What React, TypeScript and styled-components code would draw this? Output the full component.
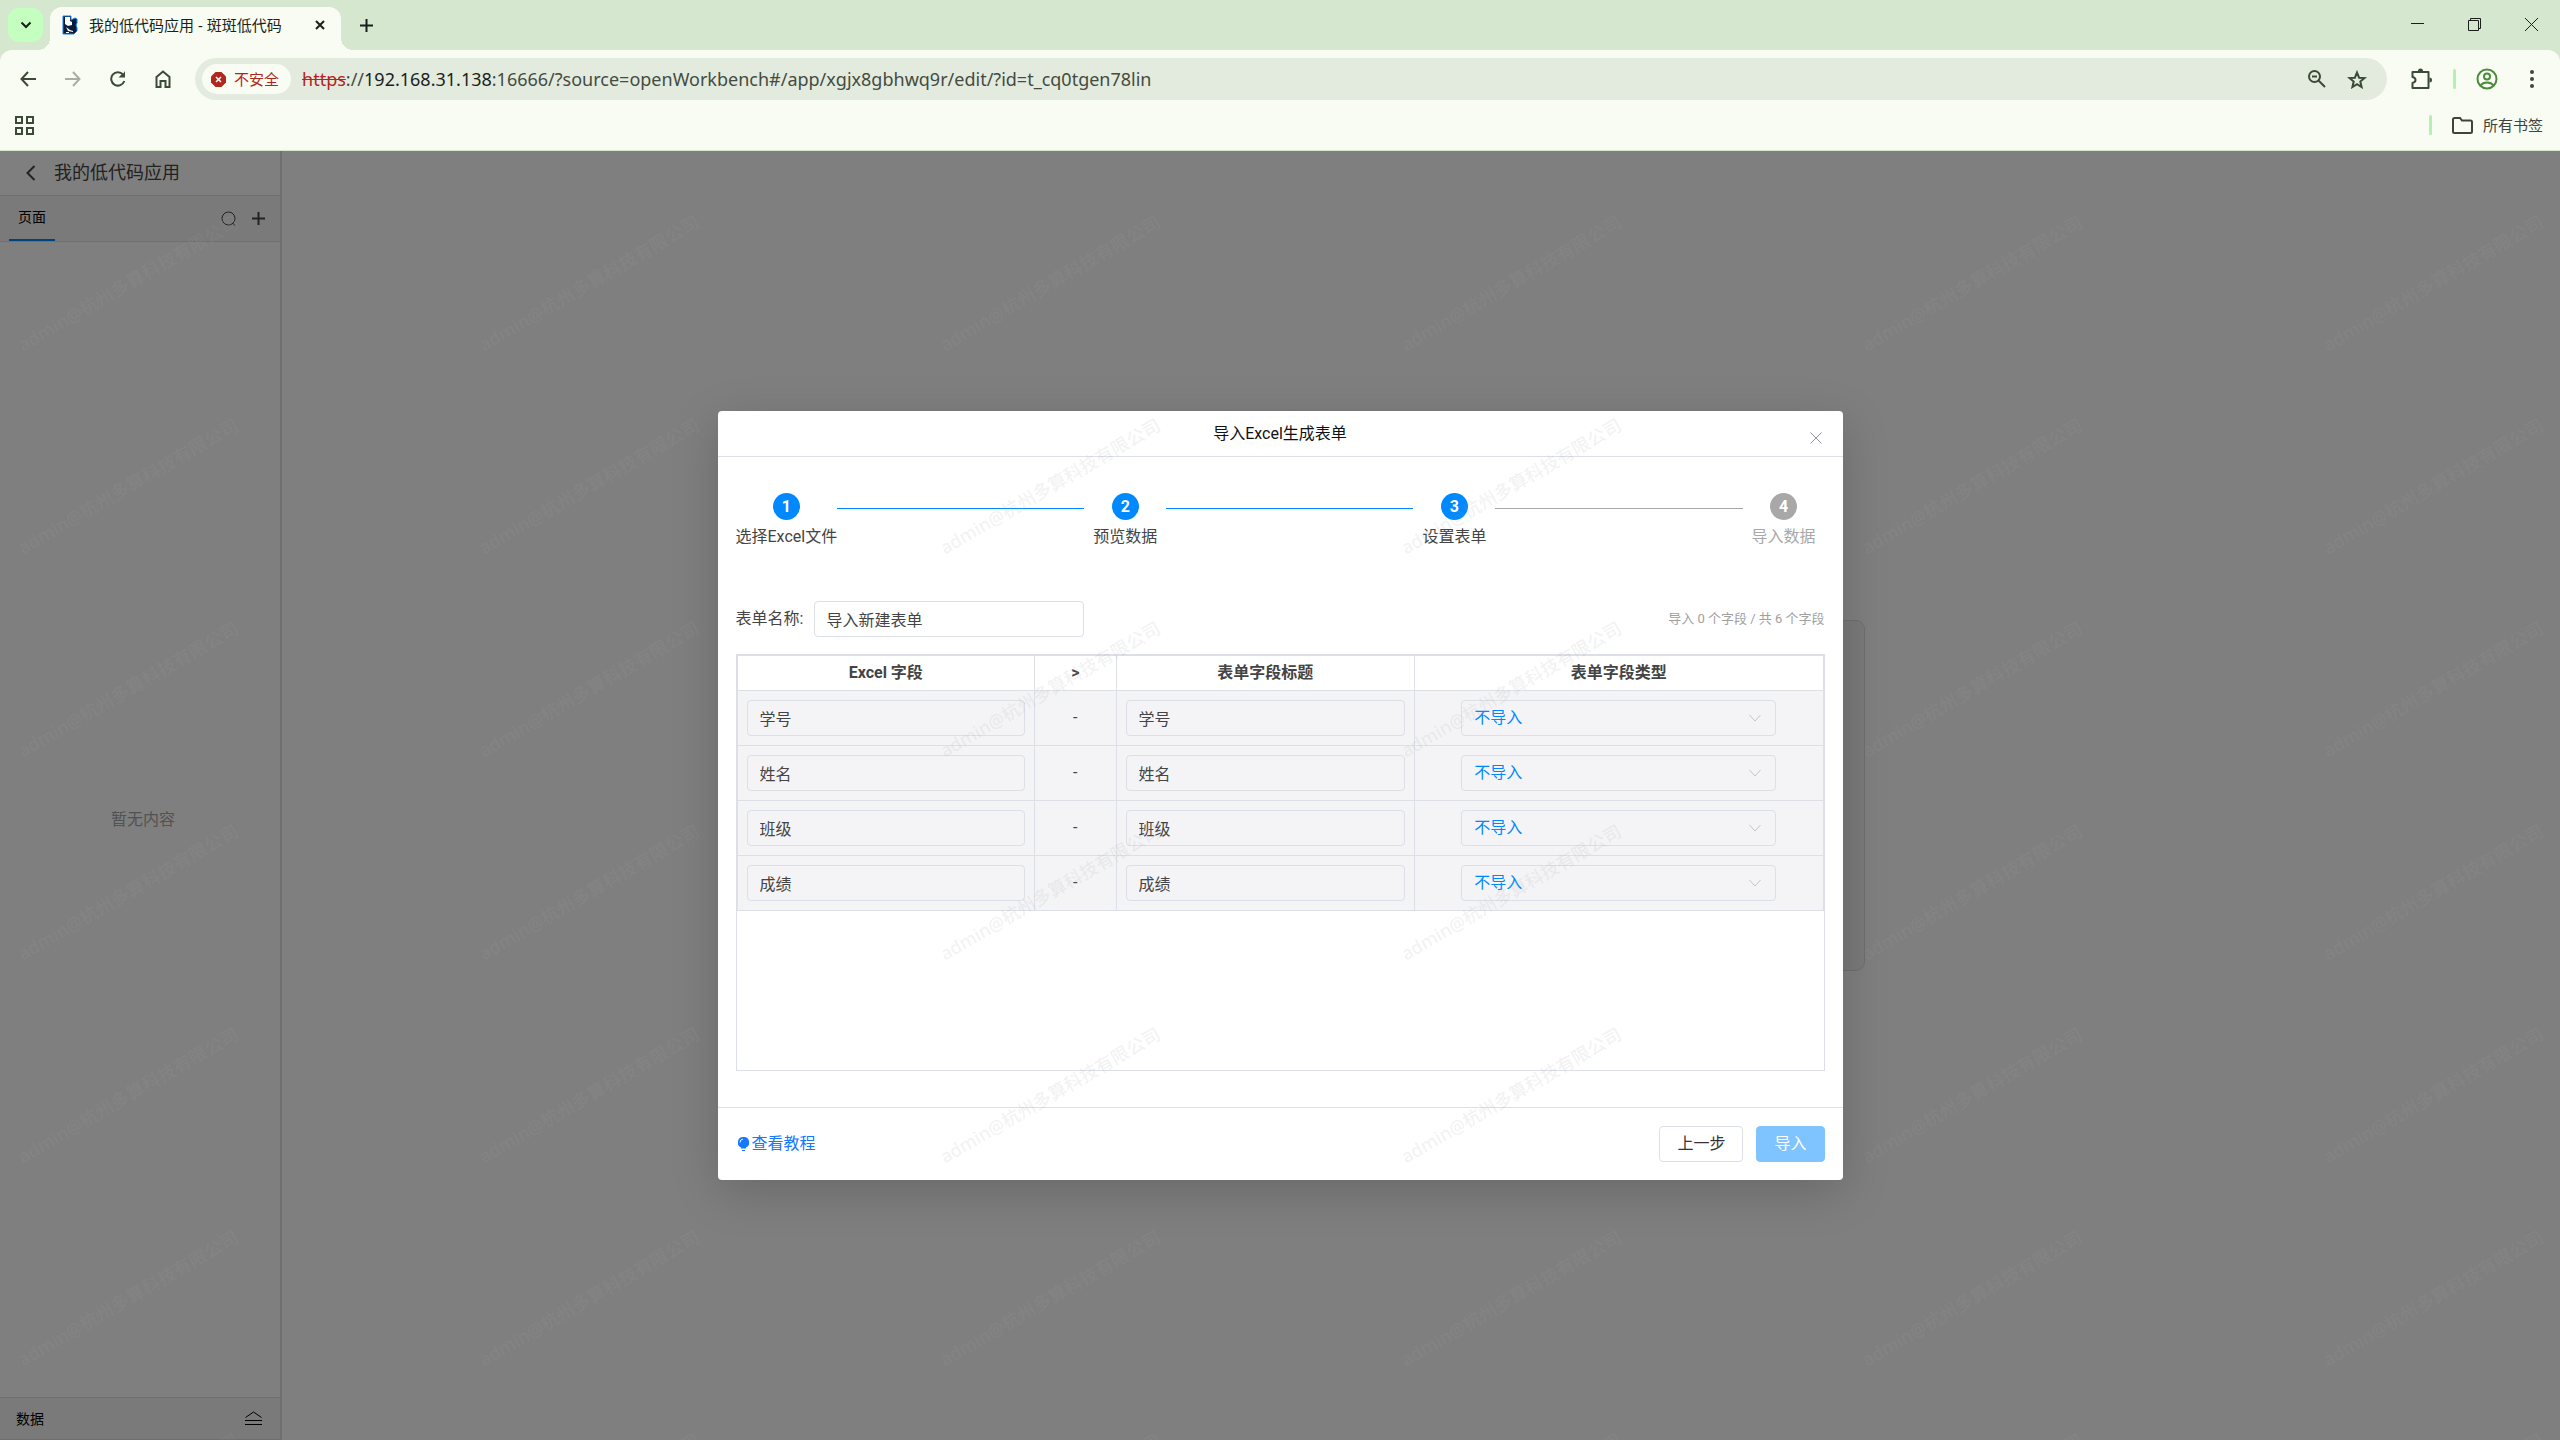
import React from "react";
import styled, { createGlobalStyle, css } from "styled-components";

const uiFont = `Roboto, "Noto Sans CJK SC", sans-serif`;
const chromeFont = `"Noto Sans", "Noto Sans CJK SC", sans-serif`;
const line = "#dcdfe6";
const blue = "#0089ff";

const GlobalStyle = createGlobalStyle`
  * { box-sizing: border-box; }
  html, body, #root { height: 100%; }
  body { margin: 0; font: 16px/24px ${uiFont}; color: #444; }
  button, input, select { font: inherit; color: inherit; margin: 0; }
  button { background: none; border: 0; padding: 0; cursor: pointer; }
  svg { display: block; }
`;

const Window = styled.div`
  display: flex;
  flex-direction: column;
  height: 100vh;
  overflow: hidden;
`;

/* ---------- browser frame ---------- */

const Frame = styled.header`
  background: #d5e7cf;
  border-bottom: 1px solid #d5e7cf;
  font: 15px/20px ${chromeFont};
  color: #1b1f1a;
`;
const TabStrip = styled.div`
  display: flex;
  height: 50px;
  padding: 7px 0 0 8px;
`;
const TabSearch = styled.button`
  width: 35px;
  height: 34px;
  margin: 1px 7px 0 0;
  border-radius: 11px;
  background: #c5ffbf;
  display: grid;
  place-items: center;
`;
const BrowserTab = styled.div`
  position: relative;
  width: 291px;
  padding: 0 13px 7px 12px;
  display: flex;
  align-items: center;
  background: #f8fcf2;
  border-radius: 12px 12px 0 0;
  &::before, &::after {
    content: "";
    position: absolute;
    bottom: 0;
    width: 12px;
    height: 12px;
  }
  &::before { left: -12px; background: radial-gradient(circle at 0 0, transparent 12px, #f8fcf2 12px); }
  &::after { right: -12px; background: radial-gradient(circle at 100% 0, transparent 12px, #f8fcf2 12px); }
`;
const TabTitle = styled.span`
  flex: 1;
  margin-left: 11px;
  white-space: nowrap;
`;
const PlainButton = styled.button<{ $w: number; $h?: number }>`
  width: ${p => p.$w}px;
  height: ${p => p.$h ?? 36}px;
  flex: none;
  display: grid;
  place-items: center;
`;
const WindowControls = styled.div`
  display: flex;
  margin-left: auto;
`;
const Chrome = styled.div`
  background: #f8fcf2;
  border-radius: 12px 12px 0 0;
  color: #3c4a38;
`;
const Toolbar = styled.div`
  display: flex;
  align-items: center;
  height: 58px;
  padding: 0 6px 0 5px;
`;
const NavButtons = styled.div`
  display: flex;
  width: 190px;
`;
const Omnibox = styled.div`
  flex: 1;
  display: flex;
  align-items: center;
  height: 42px;
  padding: 0 10px 0 7px;
  border-radius: 21px;
  background: #e3ebdf;
`;
const Unsafe = styled.button`
  display: flex;
  align-items: center;
  gap: 8px;
  height: 30px;
  padding: 0 12px 0 9px;
  border-radius: 15px;
  background: #f8fcf2;
  color: #b3261e;
  white-space: nowrap;
`;
const Url = styled.span`
  flex: 1;
  margin-left: 11px;
  font-size: 18px;
  line-height: 24px;
  white-space: nowrap;
  color: #444b41;
  s { color: #b3261e; }
  b { font-weight: 400; color: #1b1f1a; }
`;
const Divider = styled.span`
  width: 3px;
  height: 20px;
  border-radius: 2px;
  background: #b5f1ae;
`;
const Actions = styled.div`
  display: flex;
  align-items: center;
  padding-left: 11px;
`;
const Bookmarks = styled.div`
  display: flex;
  align-items: center;
  justify-content: space-between;
  height: 42px;
  padding: 0 17px 8px 15px;
`;
const AllBookmarks = styled.button`
  display: flex;
  align-items: center;
  gap: 10px;
  color: #3e433b;
`;
const BookmarkEnd = styled.div`
  display: flex;
  align-items: center;
  gap: 20px;
`;

/* ---------- application behind the dialog ---------- */

const Page = styled.div`
  position: relative;
  flex: 1;
  display: flex;
  min-height: 0;
  overflow: hidden;
`;
const Sidebar = styled.aside`
  width: 282px;
  flex: none;
  display: flex;
  flex-direction: column;
  border-right: 2px solid ${line};
  background: #fff;
`;
const AppHeader = styled.div`
  display: flex;
  align-items: center;
  height: 45px;
  padding-left: 23px;
  border-bottom: 1px solid ${line};
  font-size: 18px;
`;
const AppName = styled.span`
  margin-left: 15px;
`;
const PageTabs = styled.div`
  display: flex;
  align-items: center;
  height: 46px;
  padding: 0 7px 0 9px;
  border-bottom: 1px solid ${line};
  background: #f4f5f7;
  font-size: 14px;
`;
const PageTab = styled.button`
  height: 45px;
  padding: 0 9px 1px;
  margin-right: auto;
  border-bottom: 2px solid ${blue};
  color: #000;
`;
const Empty = styled.div`
  flex: 1;
  display: grid;
  place-items: center;
  padding-left: 6px;
  color: #a6a6a6;
`;
const DataBar = styled.div`
  display: flex;
  align-items: center;
  justify-content: space-between;
  height: 43px;
  padding: 0 18px 0 16px;
  border: solid ${line};
  border-width: 1px 0;
  background: #f4f5f7;
  font-size: 14px;
  color: #000;
`;
const Workspace = styled.main`
  flex: 1;
  display: grid;
  place-items: center;
  background: #fff;
`;
const EmptyCard = styled.div`
  width: 888px;
  height: 351px;
  border: 1px solid ${line};
  border-radius: 9px;
  background: #f4f4f5;
`;

/* ---------- dialog ---------- */

const Mask = styled.div`
  position: absolute;
  inset: 0;
  display: grid;
  place-items: center;
  background: rgba(0, 0, 0, 0.5);
`;
const Dialog = styled.section`
  width: 1125px;
  max-width: 100%;
  display: flex;
  flex-direction: column;
  background: #fff;
  border-radius: 4px;
  box-shadow: 0 12px 48px rgba(0, 0, 0, 0.18);
`;
const DialogHeader = styled.header`
  display: grid;
  grid-template-columns: 1fr auto 1fr;
  align-items: center;
  height: 46px;
  padding: 0 18px;
  border-bottom: 1px solid ${line};
`;
const DialogTitle = styled.h1`
  grid-column: 2;
  margin: 0;
  font-size: 16px;
  font-weight: 400;
  line-height: 24px;
  color: #111;
`;
const CloseButton = styled.button`
  justify-self: end;
  padding: 8px 3px 0;
  color: #909399;
`;
const DialogBody = styled.div`
  padding: 36px 18px;
`;
const Steps = styled.ol`
  display: flex;
  margin: 0 0 52px;
  padding: 0;
  list-style: none;
`;
const Step = styled.li<{ $off?: boolean }>`
  display: flex;
  flex-direction: column;
  align-items: center;
  gap: 5px;
  min-width: 82px;
  white-space: nowrap;
  color: ${p => (p.$off ? "#a8a8a8" : "#444")};
`;
const StepNumber = styled.span<{ $off?: boolean }>`
  width: 27px;
  height: 27px;
  border-radius: 50%;
  background: ${p => (p.$off ? "#a8a8a8" : blue)};
  color: #fff;
  font-weight: 700;
  line-height: 27px;
  text-align: center;
`;
const StepLine = styled.li<{ $off?: boolean }>`
  flex: 1;
  height: 1px;
  margin-top: 15px;
  background: ${p => (p.$off ? "#a8a8a8" : blue)};
`;
const NameRow = styled.div`
  display: flex;
  align-items: center;
  margin-bottom: 17px;
`;
const Count = styled.span`
  margin-left: auto;
  font-size: 13px;
  color: #a0a0a0;
`;
const fieldBox = css`
  height: 36px;
  padding: 0 12px;
  border: 1px solid ${line};
  border-radius: 4px;
  outline: 0;
  background: transparent;
`;
const TextField = styled.input<{ $width: string }>`
  ${fieldBox}
  display: block;
  width: ${p => p.$width};
`;
const NameLabel = styled.label`
  width: 78px;
`;
const TableBox = styled.div`
  height: 417px;
  border: 1px solid ${line};
`;
const FieldTable = styled.table`
  width: 100%;
  table-layout: fixed;
  border-collapse: collapse;
  th, td { border: 1px solid ${line}; text-align: center; }
  th { height: 35px; padding: 0; font-weight: 700; line-height: 24px; }
  td { height: 55px; padding: 0 9px; background: #f4f4f7; }
`;
const SelectBox = styled.div`
  position: relative;
  width: 315px;
  margin: 0 auto;
  svg { position: absolute; right: 15px; top: 14px; pointer-events: none; }
`;
const TypeSelect = styled.select`
  ${fieldBox}
  display: block;
  width: 100%;
  appearance: none;
  color: ${blue};
`;
const DialogFooter = styled.footer`
  display: flex;
  align-items: center;
  gap: 13px;
  padding: 18px;
  border-top: 1px solid ${line};
`;
const HelpLink = styled.a`
  display: flex;
  align-items: center;
  gap: 3px;
  margin-right: auto;
  padding-left: 2px;
  color: #1677ff;
  text-decoration: none;
`;
const FooterButton = styled.button<{ $primary?: boolean }>`
  height: 36px;
  padding: 0 17px;
  border: 1px solid ${p => (p.$primary ? "#7fc4ff" : line)};
  border-radius: 4px;
  background: ${p => (p.$primary ? "#7fc4ff" : "#fff")};
  color: ${p => (p.$primary ? "#fff" : "#333")};
`;

/* ---------- watermark ---------- */

const Watermarks = styled.div`
  position: absolute;
  inset: 0;
  display: grid;
  grid-template-columns: repeat(6, 461px);
  grid-auto-rows: 203px;
  align-items: center;
  padding-top: 30px;
  overflow: hidden;
  pointer-events: none;
  user-select: none;
`;
const Mark = styled.span`
  width: 256px;
  text-align: center;
  transform: rotate(-30deg);
  white-space: nowrap;
  font: 500 18px/24px ${chromeFont};
  color: rgba(160, 160, 160, 0.15);
`;

const Icon = ({ w, h = w, children, stroke = 2 }: { w: number; h?: number; stroke?: number; children: React.ReactNode }) => (
  <svg width={w} height={h} viewBox={`0 0 ${w} ${h}`} fill="none" stroke="currentColor" strokeWidth={stroke} aria-hidden="true">
    {children}
  </svg>
);

const steps = ["选择Excel文件", "预览数据", "设置表单", "导入数据"];
const fields = ["学号", "姓名", "班级", "成绩"];

const BrowserFrame = () => (
  <Frame>
    <TabStrip>
      <TabSearch aria-label="搜索标签页"><Icon w={12} h={8}><path d="M1.5 1.5 6 6l4.500-4.500" /></Icon></TabSearch>
      <BrowserTab>
        <svg width="16" height="20" viewBox="0 0 16 20" aria-hidden="true">
          <path d="M1 1h8v4l4-2 2 1v4l-1 2 1 3v3l-3 3H1z" fill="#0b1c3a" stroke="#1d7cf2" />
          <path d="M3 2h5v4l2 1v3l-4 1-3-2zM4 12l4 3 3 1v1l-5-1zM4 17h3v1H4z" fill="#fff" />
        </svg>
        <TabTitle>我的低代码应用 - 斑斑低代码</TabTitle>
        <PlainButton $w={16} $h={20} aria-label="关闭标签页"><Icon w={10}><path d="m1 1 8 8M9 1 1 9" /></Icon></PlainButton>
      </BrowserTab>
      <PlainButton $w={50} aria-label="新标签页"><Icon w={13}><path d="M6.500 0v13M0 6.500h13" /></Icon></PlainButton>
      <WindowControls>
        <PlainButton $w={57} $h={33} aria-label="最小化"><Icon w={13} stroke={1}><path d="M0 6.500h13" /></Icon></PlainButton>
        <PlainButton $w={57} $h={35} aria-label="还原"><Icon w={13} stroke={1}><path d="M.5 2.500h10v10H.5zM2.500 2.500v-2h10v10h-2" /></Icon></PlainButton>
        <PlainButton $w={57} $h={35} aria-label="关闭"><Icon w={13} stroke={1}><path d="m0 0 13 13M13 0 0 13" /></Icon></PlainButton>
      </WindowControls>
    </TabStrip>
    <Chrome>
      <Toolbar>
        <NavButtons>
          <PlainButton $w={45} aria-label="后退"><Icon w={16}><path d="M16 8H1.500M8 1 1.500 8 8 15" /></Icon></PlainButton>
          <PlainButton $w={45} disabled aria-label="前进"><svg width="16" height="16" fill="none" stroke="#a9aea5" strokeWidth="2"><path d="M0 8h14.500M8 1l6.500 7L8 15" /></svg></PlainButton>
          <PlainButton $w={45} aria-label="重新加载"><Icon w={16}><path d="M14.300 10A6.700 6.700 0 1 1 13 3.500" /><path d="M15 0v6.500H8.500L11 4l2-1z" fill="currentColor" stroke="none" /></Icon></PlainButton>
          <PlainButton $w={45} aria-label="主页"><Icon w={16} h={18}><path d="M1.500 7 8 1.500 14.500 7v10h-4v-6h-5v6h-4z" /></Icon></PlainButton>
        </NavButtons>
        <Omnibox>
          <Unsafe>
            <svg width="15" height="15" viewBox="0 0 15 15" aria-hidden="true"><path d="M4.500 0h6L15 4.500v6L10.500 15h-6L0 10.500v-6z" fill="#b3261e" /><path d="m5 5 5 5m0-5-5 5" stroke="#fff" strokeWidth="1.500" /></svg>
            不安全
          </Unsafe>
          <Url><s>https</s>://<b>192.168.31.138</b>:16666/?source=openWorkbench#/app/xgjx8gbhwq9r/edit/?id=t_cq0tgen78lin</Url>
          <PlainButton $w={40} aria-label="缩放"><Icon w={18}><circle cx="6.500" cy="6.500" r="5.500" /><path d="m10.500 10.500 6.500 6.500M4 6.500h5" /></Icon></PlainButton>
          <PlainButton $w={40} aria-label="收藏"><Icon w={20} h={19}><path d="m10 2.500 2.100 5.200 5.400.4-4.200 3.500 1.300 5.400-4.600-2.900L5.400 17l1.300-5.400L2.500 8.100l5.400-.4z" /></Icon></PlainButton>
        </Omnibox>
        <Actions>
          <PlainButton $w={46} aria-label="扩展程序"><Icon w={22}><path d="M2.500 4h16v16h-16v-5c4-1 4-5 0-6z" strokeLinejoin="round" /><path d="M8 3a2.500 2.500 0 0 1 5 0zM19.500 9.500a2.500 2.500 0 0 1 0 5z" fill="currentColor" stroke="none" /></Icon></PlainButton>
          <PlainButton as="span" $w={20}><Divider /></PlainButton>
          <PlainButton $w={46} aria-label="个人资料"><svg width="22" height="22" fill="none" stroke="#4c8a3c" strokeWidth="2"><circle cx="11" cy="11" r="9.500" /><circle cx="11" cy="8.500" r="3" /><path d="M4.500 17.500c3-4 10-4 13 0" /></svg></PlainButton>
          <PlainButton $w={44} aria-label="菜单"><svg width="4" height="18" fill="#3c4a38"><circle cx="2" cy="2" r="2" /><circle cx="2" cy="9" r="2" /><circle cx="2" cy="16" r="2" /></svg></PlainButton>
        </Actions>
      </Toolbar>
      <Bookmarks>
        <PlainButton $w={19} $h={20} aria-label="应用"><Icon w={19}><path d="M1 1h6v6H1zM12 1h6v6h-6zM1 12h6v6H1zM12 12h6v6h-6z" /></Icon></PlainButton>
        <BookmarkEnd>
          <Divider />
          <AllBookmarks><Icon w={21} h={17}><path d="M1 2.500Q1 1 2.500 1H8l2 2.500h8.500Q20 3.500 20 5v9.500q0 1.500-1.500 1.500h-16Q1 16 1 14.500z" /></Icon>所有书签</AllBookmarks>
        </BookmarkEnd>
      </Bookmarks>
    </Chrome>
  </Frame>
);

export default function App() {
  return (
    <Window>
      <GlobalStyle />
      <BrowserFrame />
      <Page>
        <Sidebar>
          <AppHeader>
            <PlainButton $w={16} $h={20} aria-label="返回"><Icon w={10} h={16}><path d="M8.500 1 1.500 8l7 7" /></Icon></PlainButton>
            <AppName>我的低代码应用</AppName>
          </AppHeader>
          <PageTabs>
            <PageTab>页面</PageTab>
            <PlainButton $w={30} aria-label="搜索"><Icon w={15} stroke={1}><circle cx="7.500" cy="7.500" r="6.500" /><path d="m11.500 12 2.500 2.500" /></Icon></PlainButton>
            <PlainButton $w={30} aria-label="新建"><Icon w={13}><path d="M6.500 0v13M0 6.500h13" /></Icon></PlainButton>
          </PageTabs>
          <Empty>暂无内容</Empty>
          <DataBar>
            数据
            <PlainButton $w={18} $h={20} aria-label="展开"><Icon w={17} h={15} stroke={1}><path d="M.5 6.500 8.500 1l8 5.500M0 9.500h17M0 13.500h17" /></Icon></PlainButton>
          </DataBar>
        </Sidebar>
        <Workspace><EmptyCard /></Workspace>
        <Mask>
          <Dialog role="dialog" aria-labelledby="dialog-title">
            <DialogHeader>
              <DialogTitle id="dialog-title">导入Excel生成表单</DialogTitle>
              <CloseButton aria-label="关闭对话框"><Icon w={12} stroke={1}><path d="m.5.5 11 11M11.500.5l-11 11" /></Icon></CloseButton>
            </DialogHeader>
            <DialogBody>
              <Steps>
                {steps.map((name, i) => (
                  <React.Fragment key={name}>
                    {i > 0 && <StepLine $off={i === 3} aria-hidden="true" />}
                    <Step $off={i === 3}>
                      <StepNumber $off={i === 3}>{i + 1}</StepNumber>
                      {name}
                    </Step>
                  </React.Fragment>
                ))}
              </Steps>
              <NameRow>
                <NameLabel htmlFor="form-name">表单名称:</NameLabel>
                <TextField id="form-name" $width="270px" defaultValue="导入新建表单" />
                <Count>导入 0 个字段 / 共 6 个字段</Count>
              </NameRow>
              <TableBox>
                <FieldTable>
                  <colgroup><col style={{ width: "27.4%" }} /><col style={{ width: "7.5%" }} /><col style={{ width: "27.5%" }} /><col /></colgroup>
                  <thead>
                    <tr><th>Excel 字段</th><th>&gt;</th><th>表单字段标题</th><th>表单字段类型</th></tr>
                  </thead>
                  <tbody>
                    {fields.map(name => (
                      <tr key={name}>
                        <td><TextField $width="100%" aria-label={`Excel 字段 ${name}`} defaultValue={name} readOnly /></td>
                        <td>-</td>
                        <td><TextField $width="100%" aria-label={`表单字段标题 ${name}`} defaultValue={name} /></td>
                        <td>
                          <SelectBox>
                            <TypeSelect aria-label={`表单字段类型 ${name}`}><option>不导入</option></TypeSelect>
                            <svg width="12" height="8" fill="none" stroke="#c0c4cc" aria-hidden="true"><path d="m.5 1 5.500 6 5.500-6" /></svg>
                          </SelectBox>
                        </td>
                      </tr>
                    ))}
                  </tbody>
                </FieldTable>
              </TableBox>
            </DialogBody>
            <DialogFooter>
              <HelpLink href="#help">
                <svg width="11" height="15" viewBox="0 0 11 15" aria-hidden="true"><path d="M5.500 0A5.500 5.500 0 0 1 8 10.500v1H3v-1A5.500 5.500 0 0 1 5.500 0zM4 13h3v1H4z" fill="#1677ff" /><path d="M2 5.500A3.500 3.500 0 0 1 5 2" fill="none" stroke="#fff" /></svg>
                查看教程
              </HelpLink>
              <FooterButton>上一步</FooterButton>
              <FooterButton $primary>导入</FooterButton>
            </DialogFooter>
          </Dialog>
        </Mask>
        <Watermarks aria-hidden="true">
          {Array.from({ length: 42 }, (_, i) => <Mark key={i}>admin@杭州多算科技有限公司</Mark>)}
        </Watermarks>
      </Page>
    </Window>
  );
}
